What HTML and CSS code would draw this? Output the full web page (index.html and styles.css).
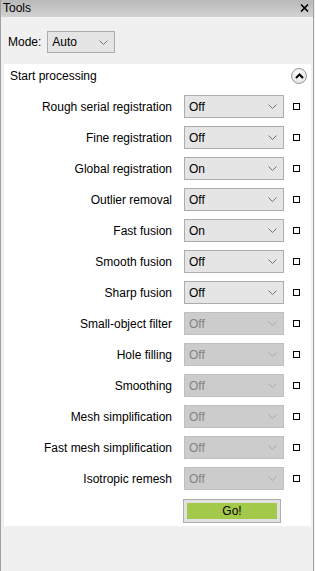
FILE: index.html
```html
<!DOCTYPE html>
<html lang="en">
  <head>
    <meta charset="UTF-8" />
    <title>Tools</title>
    <link rel="stylesheet" href="styles.css">
  </head>
  <body>
    <div class="window">
      <header class="title-bar">
        <span class="title">Tools</span>
        <svg class="close" width="9" height="8" viewBox="0 0 9 8">
          <path d="M1 0.5 L8 7.5 M8 0.5 L1 7.5" stroke="#000" stroke-width="1.6" />
        </svg>
      </header>

      <div class="mode-row">
        <span class="mode-label">Mode:</span>
        <div class="combo mode-combo">
          <span>Auto</span>
          <svg class="chev" width="9" height="5" viewBox="0 0 9 5"><path d="M0.5 0.5 L4.5 4.5 L8.5 0.5" fill="none" stroke="#707070" /></svg>
        </div>
      </div>

      <section class="panel">
        <div class="panel-head">
          <span>Start processing</span>
          <span class="collapse">
            <svg width="9" height="6" viewBox="0 0 9 6"><path d="M1 5 L4.5 1.5 L8 5" fill="none" stroke="#000" stroke-width="2" /></svg>
          </span>
        </div>

        <div class="steps" id="steps"></div>

        <div class="go-row">
          <button class="go"><span>Go!</span></button>
        </div>
      </section>
    </div>

    <script>
      const steps = [
        ['Rough serial registration', 'Off', true],
        ['Fine registration', 'Off', true],
        ['Global registration', 'On', true],
        ['Outlier removal', 'Off', true],
        ['Fast fusion', 'On', true],
        ['Smooth fusion', 'Off', true],
        ['Sharp fusion', 'Off', true],
        ['Small-object filter', 'Off', false],
        ['Hole filling', 'Off', false],
        ['Smoothing', 'Off', false],
        ['Mesh simplification', 'Off', false],
        ['Fast mesh simplification', 'Off', false],
        ['Isotropic remesh', 'Off', false]
      ];

      const list = document.getElementById('steps');
      steps.forEach(([name, value, enabled]) => {
        const row = document.createElement('div');
        row.className = 'step';
        row.innerHTML =
          '<span class="step-name">' + name + '</span>' +
          '<div class="combo' + (enabled ? '' : ' disabled') + '"><span>' + value + '</span>' +
          '<svg class="chev" width="9" height="5" viewBox="0 0 9 5"><path d="M0.5 0.5 L4.5 4.5 L8.5 0.5" fill="none" /></svg></div>' +
          '<span class="check"></span>';
        list.appendChild(row);
      });
    </script>
  </body>
</html>
```

FILE: styles.css
```css
* {
  margin: 0;
  padding: 0;
  box-sizing: border-box;
}

body {
  font-family: "Liberation Sans", Arial, sans-serif;
  font-size: 12px;
  color: #000;
  background-color: #f0f0f0;
}

.window {
  width: 314px;
  height: 571px;
  border-left: 1px solid #a0a0a0;
  border-right: 1px solid #a0a0a0;
  background-color: #f0f0f0;
}

.title-bar {
  height: 17px;
  display: flex;
  justify-content: space-between;
  align-items: center;
  padding: 0 4px 0 2px;
  background: linear-gradient(#b9b9b9, #d2d2d2);
}

.title {
  font-size: 12px;
  line-height: 17px;
}

.close {
  display: block;
  margin-top: -1px;
}

.mode-row {
  display: flex;
  align-items: flex-start;
  gap: 6px;
  padding: 14px 0 0 7px;
  height: 47px;
}

.mode-label {
  line-height: 22px;
}

.combo {
  display: flex;
  justify-content: space-between;
  align-items: center;
  height: 23px;
  padding: 0 6px 0 4px;
  background-color: #e5e5e5;
  border: 1px solid #acacac;
  color: #000;
}

.combo .chev path {
  stroke: #707070;
}

.combo.disabled {
  background-color: #cccccc;
  border-color: #bfbfbf;
  color: #838383;
}

.combo.disabled .chev path {
  stroke: #a8a8a8;
}

.mode-combo {
  width: 68px;
  height: 22px;
}

.panel {
  margin-left: 3px;
  width: 307px;
  height: 462px;
  background-color: #ffffff;
}

.panel-head {
  display: flex;
  justify-content: space-between;
  align-items: center;
  height: 24px;
  padding: 0 4px 0 6px;
}

.collapse {
  width: 16px;
  height: 16px;
  border-radius: 50%;
  border: 1px solid #9a9a9a;
  background: radial-gradient(circle at 50% 35%, #ffffff, #dcdcdc);
  display: flex;
  justify-content: center;
  align-items: center;
}

.collapse svg {
  display: block;
  margin-top: -1px;
}

.steps {
  display: flex;
  flex-direction: column;
  gap: 8px;
  padding-top: 7px;
}

.step {
  display: grid;
  grid-template-columns: 1fr 100px 7px;
  column-gap: 9px;
  align-items: center;
  padding-right: 11px;
}

.step-name {
  text-align: right;
  padding-right: 3px;
}

.check {
  width: 7px;
  height: 7px;
  border: 1px solid #000;
  background-color: #fff;
}

.go-row {
  padding: 9px 0 0 179px;
}

.go {
  display: block;
  width: 98px;
  height: 24px;
  padding: 3px;
  border: 1px solid #adadad;
  background-color: #e1e1e1;
  font-family: inherit;
  font-size: 12px;
  cursor: pointer;
}

.go span {
  display: block;
  height: 16px;
  line-height: 16px;
  background-color: #a3c94b;
  color: #000;
}
```
